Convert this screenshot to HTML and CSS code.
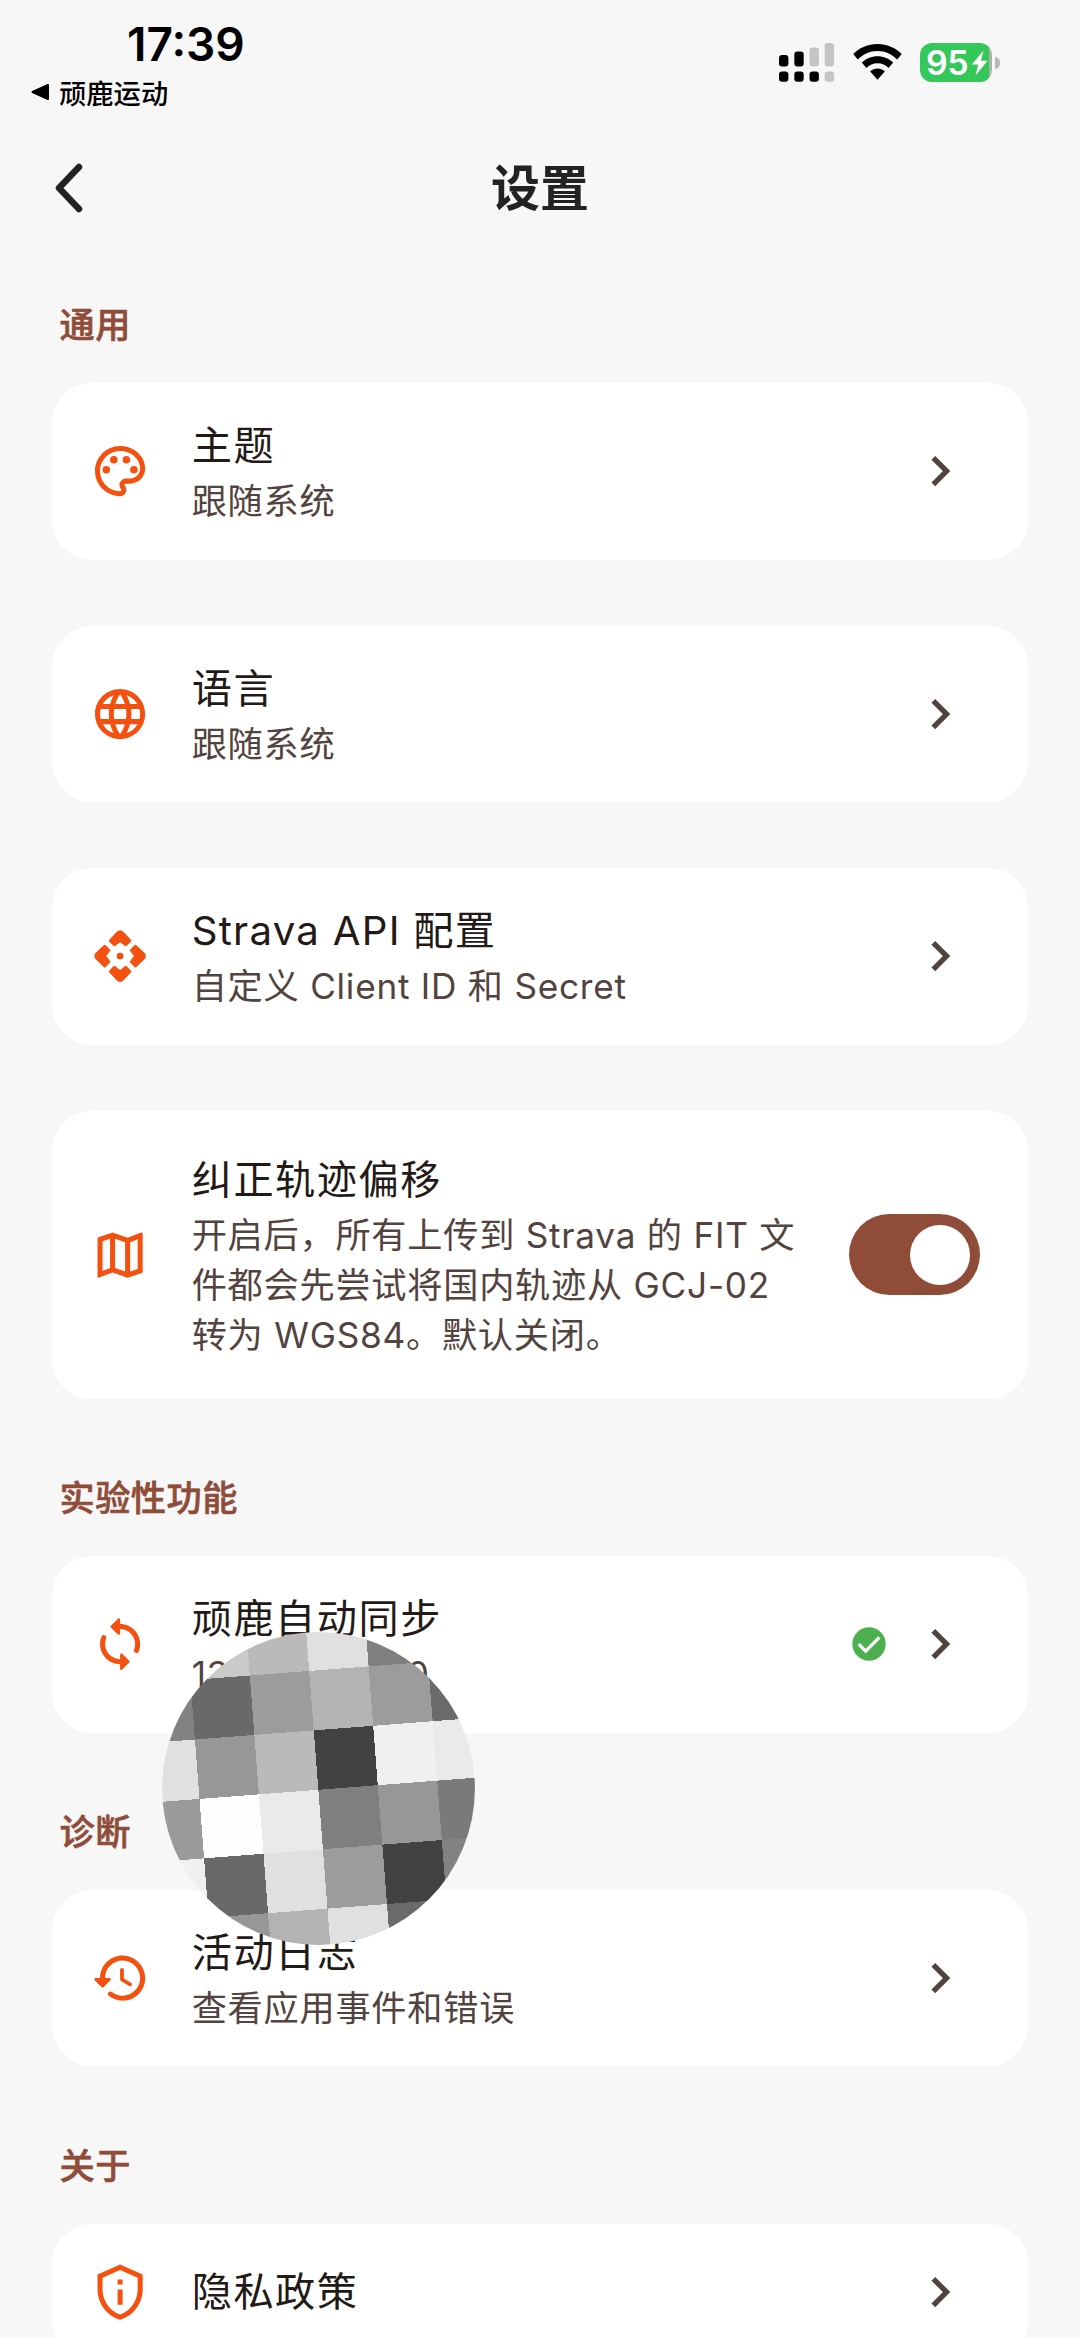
FILE: index.html
```html
<!DOCTYPE html>
<html lang="zh-CN">
<head>
<meta charset="utf-8">
<title>设置</title>
<link rel="stylesheet" href="styles.css">
</head>
<body>
<svg class="defs" width="0" height="0">
  <symbol id="chevron" viewBox="0 0 24 24"><path d="M9.3 6.700 14.600 12l-5.300 5.300" fill="none" stroke="currentColor" stroke-width="2.100" /></symbol>
</svg>
<div class="screen">
  <header class="status">
    <div class="status-left">
      <div class="clock">17:39</div>
      <div class="return"><svg width="19" height="18" viewBox="0 0 19 18"><path d="M1.5 9 17 2v14z" stroke="#000" stroke-width="2" stroke-linejoin="round"/></svg><span>顽鹿运动</span></div>
    </div>
    <div class="status-right">
      <svg class="signal" width="56" height="39" viewBox="0 0 56 39">
        <g><rect y="12" width="9.4" height="11.5" rx="3"/><rect x="15.3" y="8.5" width="9.4" height="15" rx="3"/><rect y="28.500" width="9.4" height="10.3" rx="3"/><rect x="15.300" y="28.500" width="9.400" height="10.300" rx="3"/><rect x="30.500" y="28.500" width="9.400" height="10.300" rx="3"/></g>
        <g fill="#c4c4c4"><rect x="30.500" y="4.500" width="9.400" height="19" rx="3"/><rect x="45.700" y="0" width="9.400" height="23.500" rx="3"/><rect x="45.700" y="28.500" width="9.400" height="10.300" rx="3"/></g>
      </svg>
      <svg class="wifi" width="49" height="36" viewBox="0 0 49 36">
        <path d="M24.500 0C34 0 42.500 3.800 48.700 10l-4.500 5.500C39 10.300 32.200 7 24.500 7S10 10.300 4.800 15.500L.300 10C6.500 3.800 15 0 24.500 0z"/>
        <path d="M24.500 12.200c6.100 0 11.600 2.400 15.700 6.400L35.600 24c-2.900-2.800-6.800-4.700-11.100-4.700S16.300 21.200 13.400 24l-4.600-5.400c4.100-4 9.600-6.400 15.700-6.400z"/>
        <path d="M24.500 24.400c2.900 0 5.400 1.200 7.300 3.100l-7.300 8.300-7.300-8.300c1.900-1.900 4.400-3.100 7.300-3.100z"/>
      </svg>
      <div class="battery"><span>95</span><svg width="17" height="26" viewBox="0 0 17 26"><path d="M12.500.500.800 14.600h6.400L4.500 25.500 16.500 10.800H10z" fill="#fff"/></svg></div>
      <div class="nub"></div>
    </div>
  </header>

  <nav class="bar">
    <svg width="30" height="52" viewBox="0 0 30 52"><path d="M25 5 5 26l20 21" fill="none" stroke="#222" stroke-width="6.500" stroke-linecap="round" stroke-linejoin="round"/></svg>
    <h1>设置</h1>
  </nav>

  <main>
    <h2 class="first">通用</h2>
    <section class="card">
      <svg class="icon" viewBox="0 0 24 24"><path d="M12 22C6.490 22 2 17.510 2 12S6.490 2 12 2s10 4.040 10 9c0 3.310-2.690 6-6 6h-1.770c-.280 0-.500.220-.500.500 0 .120.050.230.130.330.410.470.640 1.060.640 1.670A2.500 2.500 0 0 1 12 22zm0-18c-4.410 0-8 3.590-8 8s3.590 8 8 8c.280 0 .500-.220.500-.500 0-.160-.080-.280-.140-.350-.410-.460-.630-1.050-.630-1.650a2.500 2.500 0 0 1 2.500-2.500H16c2.210 0 4-1.790 4-4 0-3.860-3.590-7-8-7z"/><circle cx="6.500" cy="11.500" r="1.500"/><circle cx="9.500" cy="7.500" r="1.500"/><circle cx="14.500" cy="7.500" r="1.500"/><circle cx="17.500" cy="11.500" r="1.500"/></svg>
      <div class="text"><h3>主题</h3><p>跟随系统</p></div>
      <svg class="go"><use href="#chevron"/></svg>
    </section>
    <section class="card">
      <svg class="icon" viewBox="0 0 24 24"><path d="M11.990 2C6.470 2 2 6.480 2 12s4.470 10 9.990 10C17.520 22 22 17.520 22 12S17.520 2 11.990 2zm6.930 6h-2.950c-.320-1.250-.780-2.450-1.380-3.560 1.840.630 3.370 1.910 4.330 3.560zM12 4.040c.830 1.200 1.480 2.530 1.910 3.960h-3.820c.430-1.430 1.080-2.760 1.910-3.960zM4.260 14C4.100 13.360 4 12.690 4 12s.100-1.360.260-2h3.380c-.080.660-.140 1.320-.140 2s.060 1.340.140 2H4.260zm.820 2h2.950c.320 1.250.780 2.450 1.380 3.560-1.840-.630-3.370-1.900-4.330-3.560zm2.950-8H5.080c.960-1.660 2.490-2.930 4.330-3.560C8.810 5.550 8.350 6.750 8.030 8zM12 19.960c-.830-1.200-1.480-2.530-1.910-3.960h3.820c-.430 1.430-1.080 2.760-1.910 3.960zM14.340 14H9.660c-.090-.660-.160-1.320-.160-2s.070-1.350.160-2h4.680c.090.650.160 1.320.160 2s-.070 1.340-.160 2zm.250 5.560c.600-1.110 1.060-2.310 1.380-3.560h2.950c-.960 1.650-2.490 2.930-4.330 3.560zM16.360 14c.080-.660.140-1.320.140-2s-.060-1.340-.140-2h3.380c.160.640.260 1.310.260 2s-.100 1.360-.260 2h-3.380z"/></svg>
      <div class="text"><h3>语言</h3><p>跟随系统</p></div>
      <svg class="go"><use href="#chevron"/></svg>
    </section>
    <section class="card">
      <svg class="icon" viewBox="0 0 24 24">
        <path id="arm" d="M10.600 2.400Q12 1 13.400 2.400L16.300 5.500Q16.700 5.900 16.300 6.300L14.300 8.200 12 6.500 9.700 8.200 7.700 6.300Q7.300 5.900 7.700 5.500z"/>
        <use href="#arm" transform="rotate(90 12 12)"/><use href="#arm" transform="rotate(180 12 12)"/><use href="#arm" transform="rotate(270 12 12)"/>
        <circle cx="12" cy="12" r="1.350"/>
      </svg>
      <div class="text"><h3 class="mixed">Strava API 配置</h3><p>自定义 Client ID 和 Secret</p></div>
      <svg class="go"><use href="#chevron"/></svg>
    </section>
    <section class="card">
      <svg class="icon" viewBox="0 0 24 24"><path d="m20.500 3-.160.030L15 5.100 9 3 3.360 4.900c-.210.070-.360.250-.360.480V20.500c0 .280.220.500.500.500l.160-.030L9 18.900l6 2.100 5.640-1.900c.210-.070.360-.250.360-.480V3.500c0-.280-.220-.500-.500-.500zM10 5.470l4 1.400v11.660l-4-1.400V5.470zm-5 .990 3-1.010v11.700l-3 1.160V6.460zm14 11.080-3 1.010V6.860l3-1.160v11.840z"/></svg>
      <div class="text"><h3>纠正轨迹偏移</h3><p>开启后，所有上传到 Strava 的 FIT 文<br>件都会先尝试将国内轨迹从 GCJ-02<br>转为 WGS84。默认关闭。</p></div>
      <div class="toggle"><i></i></div>
    </section>

    <h2>实验性功能</h2>
    <section class="card">
      <svg class="icon" viewBox="0 0 24 24"><path d="M12 4V2.210c0-.450-.540-.670-.850-.350l-2.800 2.790c-.200.200-.200.510 0 .710l2.790 2.790c.320.310.860.090.860-.360V6c3.310 0 6 2.690 6 6 0 .790-.150 1.560-.440 2.250-.150.360-.040.770.230 1.040.510.510 1.370.330 1.640-.340.370-.910.570-1.910.570-2.950 0-4.420-3.580-8-8-8zm0 14c-3.310 0-6-2.690-6-6 0-.790.150-1.560.440-2.250.150-.360.040-.770-.230-1.040-.510-.510-1.370-.330-1.640.340C4.200 9.960 4 10.960 4 12c0 4.420 3.580 8 8 8v1.790c0 .450.540.670.850.350l2.790-2.790c.200-.200.200-.510 0-.710l-2.790-2.790c-.310-.310-.850-.090-.850.360V18z"/></svg>
      <div class="text"><h3>顽鹿自动同步</h3><p class="account"><span>13</span><span>0</span></p></div>
      <svg class="ok" viewBox="0 0 24 24"><circle cx="12" cy="12" r="10" fill="#4caf50"/><path d="m5.800 12.100 4.200 4.200 8.200-8.300" fill="none" stroke="#fff" stroke-width="2"/></svg>
      <svg class="go"><use href="#chevron"/></svg>
    </section>

    <h2>诊断</h2>
    <section class="card">
      <svg class="icon" viewBox="0 0 24 24"><path d="M13.260 3C8.170 2.860 4 6.950 4 12H2.210c-.450 0-.670.540-.350.850l2.790 2.800c.200.200.510.200.710 0l2.790-2.800c.310-.310.090-.850-.360-.850H6c0-3.900 3.180-7.050 7.100-7 3.720.050 6.850 3.180 6.900 6.900.050 3.910-3.100 7.100-7 7.100-1.610 0-3.100-.550-4.280-1.480-.400-.310-.960-.280-1.320.080-.420.420-.390 1.130.080 1.490C9 20.290 10.910 21 13 21c5.050 0 9.140-4.170 9-9.260-.130-4.690-4.050-8.610-8.740-8.740zm-.510 5c-.410 0-.750.340-.750.750v3.680c0 .350.190.680.490.860l3.120 1.850c.360.210.820.090 1.030-.260.210-.360.090-.820-.260-1.030l-2.880-1.710v-3.400c0-.400-.340-.740-.750-.740z"/></svg>
      <div class="text"><h3>活动日志</h3><p>查看应用事件和错误</p></div>
      <svg class="go"><use href="#chevron"/></svg>
    </section>

    <h2>关于</h2>
    <section class="card single">
      <svg class="icon" viewBox="0 0 24 24"><path d="M12 1 3 5v6c0 5.550 3.840 10.740 9 12 5.160-1.260 9-6.450 9-12V5l-9-4zm7 10c0 4.520-2.980 8.690-7 9.930-4.020-1.240-7-5.410-7-9.930V6.300l7-3.110 7 3.110V11zm-8 0h2v6h-2zm0-4h2v2h-2z"/></svg>
      <div class="text"><h3>隐私政策</h3></div>
      <svg class="go"><use href="#chevron"/></svg>
    </section>
  </main>

  <svg class="mosaic" viewBox="161.500 1632 313 313">
    <clipPath id="disc"><circle cx="318" cy="1788.500" r="156.400"/></clipPath>
    <g clip-path="url(#disc)"><g transform="translate(249.300 1675.500) rotate(-4.400) scale(59.600)" shape-rendering="crispEdges">
      <rect x="-2" y="-1" width="2" height="1" fill="#cacaca"/><rect x="0" y="-1" width="1" height="1" fill="#bababa"/><rect x="1" y="-1" width="1" height="1" fill="#e0e0e0"/><rect x="2" y="-1" width="2" height="1" fill="#7f7f7f"/>
      <rect x="-2" width="1" height="1" fill="#828282"/><rect x="-1" width="1" height="1" fill="#696969"/><rect width="1" height="1" fill="#9c9c9c"/><rect x="1" width="1" height="1" fill="#b3b3b3"/><rect x="2" width="1" height="1" fill="#9c9c9c"/><rect x="3" width="1" height="1" fill="#6a6a6a"/>
      <rect x="-2" y="1" width="1" height="1" fill="#e0e0e0"/><rect x="-1" y="1" width="1" height="1" fill="#979797"/><rect y="1" width="1" height="1" fill="#bababa"/><rect x="1" y="1" width="1" height="1" fill="#424242"/><rect x="2" y="1" width="1" height="1" fill="#f0f0f0"/><rect x="3" y="1" width="1" height="1" fill="#eaeaea"/>
      <rect x="-2" y="2" width="1" height="1" fill="#9a9a9a"/><rect x="-1" y="2" width="1" height="1" fill="#fdfdfd"/><rect y="2" width="1" height="1" fill="#eaeaea"/><rect x="1" y="2" width="1" height="1" fill="#7f7f7f"/><rect x="2" y="2" width="1" height="1" fill="#979797"/><rect x="3" y="2" width="1" height="1" fill="#7a7a7a"/>
      <rect x="-2" y="3" width="1" height="1" fill="#f0f0f0"/><rect x="-1" y="3" width="1" height="1" fill="#696969"/><rect y="3" width="1" height="1" fill="#e0e0e0"/><rect x="1" y="3" width="1" height="1" fill="#9c9c9c"/><rect x="2" y="3" width="1" height="1" fill="#424242"/><rect x="3" y="3" width="1" height="1" fill="#828282"/>
      <rect x="-1" y="4" width="1" height="1" fill="#979797"/><rect y="4" width="1" height="1" fill="#b3b3b3"/><rect x="1" y="4" width="1" height="1" fill="#e0e0e0"/><rect x="2" y="4" width="1" height="1" fill="#6a6a6a"/>
    </g></g>
  </svg>
</div>
</body>
</html>
```
FILE: styles.css
```css
* { box-sizing: border-box; margin: 0; padding: 0; }
body { background: #f7f7f7; }
.defs { display: block; }
.screen {
  position: relative;
  width: 1080px;
  height: 2338px;
  overflow: hidden;
  background: #f7f7f7;
  font-family: Inter, "Noto Sans CJK SC", sans-serif;
  font-weight: 400;
}
svg { display: block; flex: none; }

.status { display: flex; justify-content: space-between; height: 124px; }
.clock {
  padding: 17px 0 0 127px;
  font-size: 46px;
  line-height: 54px;
  font-weight: 600;
}
.return {
  display: flex;
  align-items: center;
  gap: 9px;
  padding-left: 31px;
  height: 41px;
  font-size: 27.300px;
  font-weight: 500;
}
.status-right { display: flex; align-items: flex-start; padding: 43px 80px 0 0; }
.wifi { margin: 1px 18px 0 18px; }
.battery {
  display: flex;
  align-items: center;
  width: 72px;
  height: 39px;
  padding-left: 6px;
  border-radius: 12px;
  background: linear-gradient(90deg, #34c759 96%, #a9b5ab 96%);
  color: #fff;
  font-size: 34px;
  font-weight: 600;
}
.battery span { width: 45px; letter-spacing: -0.5px; }
.nub { width: 5px; height: 12px; margin: 14px 0 0 3px; background: #b9b9b9; border-radius: 0 6px 6px 0; }

.bar { display: grid; grid-template-columns: 1fr auto 1fr; align-items: center; height: 128px; padding: 0 54px; }
.bar h1 { padding-top: 1px; font-size: 49px; line-height: 60px; font-weight: 600; color: #222; }

main { padding: 0 52px; }
h2 {
  margin: 74.200px 0 33px;
  padding-left: 7.500px;
  font-size: 35.200px;
  line-height: 50px;
  font-weight: 500;
  letter-spacing: 0.500px;
  color: #8f4c38;
  -webkit-text-stroke: 0.600px #8f4c38;
}
h2.first { margin-top: 48px; }
.card {
  display: flex;
  align-items: center;
  padding: 33.300px 58px 33.300px 38px;
  background: #fff;
  border-radius: 40px;
}
.card + .card { margin-top: 66px; }
.card:has(.toggle) { padding: 39px 48px 39px 38px; }
.card.single { padding-top: 38px; padding-bottom: 38px; }
.icon { width: 60.200px; height: 60.200px; margin-right: 41.500px; fill: currentColor; color: #f4500f; }
.text { flex: 1; white-space: nowrap; }
h3 { font-size: 40.200px; line-height: 60px; font-weight: 400; letter-spacing: 1.500px; color: #231a18; }
h3.mixed { letter-spacing: 1.250px; }
p { font-size: 35.200px; line-height: 50px; letter-spacing: 0.750px; color: #53433f; }
.account { display: flex; justify-content: space-between; width: 238px; }
.go { width: 60.200px; height: 60.200px; color: #4f423f; }
.ok { width: 40px; height: 40px; margin-right: 21px; }
.toggle { display: flex; justify-content: flex-end; width: 131px; height: 81px; padding: 10.500px; border-radius: 41px; background: #8f4c38; }
.toggle i { width: 60px; height: 60px; border-radius: 50%; background: #fff; }

.mosaic { position: absolute; left: 161.500px; top: 1632px; width: 313px; height: 313px; }
```
